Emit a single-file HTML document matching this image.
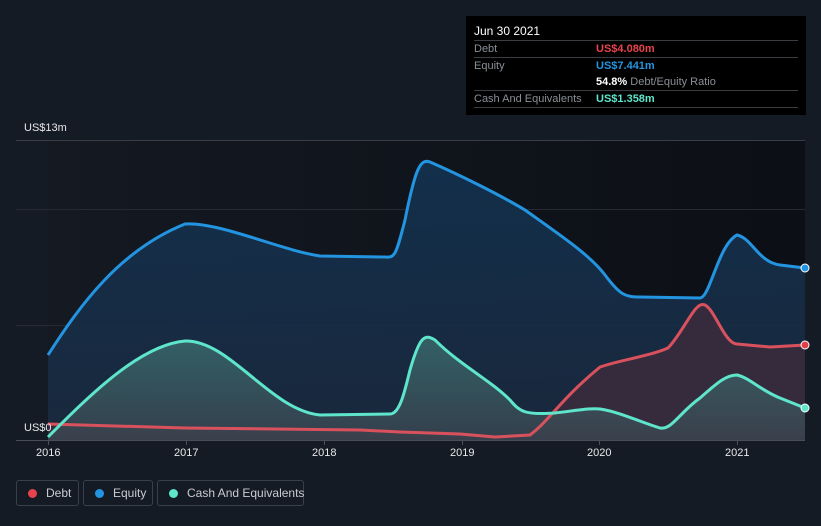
<!DOCTYPE html>
<html><head><meta charset="utf-8"><style>
body{margin:0;background:#151b25;font-family:"Liberation Sans",sans-serif;}
.w{position:relative;width:821px;height:526px;overflow:hidden;background:#151b25}
.tt{position:absolute;left:466px;top:16px;width:340px;height:99px;background:#000;font-size:11px;color:#8a8f96;white-space:nowrap}
.tt .r{position:absolute;left:8px;width:324px;border-top:1px solid #3a3d42;height:16px;line-height:16px}
.tt .v{position:absolute;left:122px;font-weight:bold}
.lg{position:absolute;top:480px;height:26px;border:1px solid #3a404a;border-radius:3px;color:#c8ccd2;font-size:12px;line-height:24px;box-sizing:border-box;white-space:nowrap}
.lg i{display:inline-block;width:9px;height:9px;border-radius:50%;margin:0 9px 0 11px;vertical-align:-1px}
.ax{position:absolute;color:#e6e8ea;font-size:11px}
</style></head><body><div class="w">
<svg width="821" height="526" style="position:absolute;left:0;top:0">
<defs>
<linearGradient id="bg" x1="0" x2="1" y1="0" y2="0"><stop offset="0" stop-color="#141922"/><stop offset="1" stop-color="#0c0f15"/></linearGradient>
<linearGradient id="eq" x1="0" x2="0" y1="0" y2="1"><stop offset="0" stop-color="#133250" stop-opacity=".9"/><stop offset="1" stop-color="#1a2a40" stop-opacity=".9"/></linearGradient>
<linearGradient id="cs" x1="0" x2="0" y1="0" y2="1"><stop offset="0" stop-color="#3a6e6e" stop-opacity=".8"/><stop offset="1" stop-color="#3a4550" stop-opacity=".8"/></linearGradient>
</defs>
<rect x="48" y="140" width="757" height="300" fill="url(#bg)"/>
<line x1="16" x2="805" y1="140.5" y2="140.5" stroke="#3a3f47"/>
<line x1="16" x2="805" y1="209.5" y2="209.5" stroke="#262b33"/>
<line x1="16" x2="805" y1="325.5" y2="325.5" stroke="#262b33"/>
<path d="M48,355 C80,305 120,250 185,224 C220,222 280,250 320,256 L385,257 C395,258 396,255 405,220 C415,170 420,158 430,162 C460,175 500,195 525,210 C560,235 590,255 605,275 C620,295 625,297 640,297 L700,298 C710,298 718,245 737,235 C752,238 758,262 780,265 L805,268 L805,440 L48,440Z" fill="url(#eq)"/>
<path d="M48,424 L185,428 L360,430 L400,432 L460,434 L495,437 L530,435 C550,420 560,400 600,367 C620,360 650,356 668,348 C685,330 695,300 705,305 C715,310 725,344 737,344 L770,347 L805,345 L805,440 L48,440Z" fill="#3c2c3c" fill-opacity=".85"/>
<path d="M48,437 C90,395 140,345 185,341 C230,340 270,410 320,415 L390,414 C400,414 405,390 410,370 C420,335 425,334 435,340 C460,365 490,380 510,400 C520,412 525,415 555,413 C580,410 590,408 600,409 C620,412 640,422 660,428 C672,430 680,412 700,398 C715,385 725,375 737,375 C750,378 760,390 780,398 L805,408 L805,440 L48,440Z" fill="url(#cs)"/>
<g fill="none" stroke-width="3" stroke-linejoin="round">
<path d="M48,355 C80,305 120,250 185,224 C220,222 280,250 320,256 L385,257 C395,258 396,255 405,220 C415,170 420,158 430,162 C460,175 500,195 525,210 C560,235 590,255 605,275 C620,295 625,297 640,297 L700,298 C710,298 718,245 737,235 C752,238 758,262 780,265 L805,268" stroke="#2394e0"/>
<path d="M48,424 L185,428 L360,430 L400,432 L460,434 L495,437 L530,435 C550,420 560,400 600,367 C620,360 650,356 668,348 C685,330 695,300 705,305 C715,310 725,344 737,344 L770,347 L805,345" stroke="#d9515c"/>
<path d="M48,437 C90,395 140,345 185,341 C230,340 270,410 320,415 L390,414 C400,414 405,390 410,370 C420,335 425,334 435,340 C460,365 490,380 510,400 C520,412 525,415 555,413 C580,410 590,408 600,409 C620,412 640,422 660,428 C672,430 680,412 700,398 C715,385 725,375 737,375 C750,378 760,390 780,398 L805,408" stroke="#5ee5cb"/>
</g>
<line x1="16" x2="805" y1="440.5" y2="440.5" stroke="#4a4f57"/>
<g stroke="#4a4f57"><line x1="48.5" x2="48.5" y1="440" y2="445"/><line x1="186.5" x2="186.5" y1="440" y2="445"/><line x1="324.5" x2="324.5" y1="440" y2="445"/><line x1="462.5" x2="462.5" y1="440" y2="445"/><line x1="599.5" x2="599.5" y1="440" y2="445"/><line x1="737.5" x2="737.5" y1="440" y2="445"/></g>
<circle cx="805" cy="268" r="4" fill="#2394e0" stroke="#fff" stroke-width="1"/>
<circle cx="805" cy="345" r="4" fill="#e0404a" stroke="#fff" stroke-width="1"/>
<circle cx="805" cy="408" r="4" fill="#5ee5cb" stroke="#fff" stroke-width="1"/>
</svg>
<div class="ax" style="left:24px;top:122px">US$13m</div>
<div class="ax" style="left:24px;top:422px">US$0</div>
<div class="ax" style="left:36px;top:447px">2016</div>
<div class="ax" style="left:174px;top:447px">2017</div>
<div class="ax" style="left:312px;top:447px">2018</div>
<div class="ax" style="left:450px;top:447px">2019</div>
<div class="ax" style="left:587px;top:447px">2020</div>
<div class="ax" style="left:725px;top:447px">2021</div>
<div class="tt">
<div style="position:absolute;left:8px;top:8px;color:#fff;font-size:12px">Jun 30 2021</div>
<div class="r" style="top:24px">Debt<span class="v" style="color:#e8434d">US$4.080m</span></div>
<div class="r" style="top:41px">Equity<span class="v" style="color:#2394e0">US$7.441m</span></div>
<div style="position:absolute;left:130px;top:58px;line-height:16px"><b style="color:#fff">54.8%</b> Debt/Equity Ratio</div>
<div class="r" style="top:74px">Cash And Equivalents<span class="v" style="color:#5ee5cb">US$1.358m</span></div>
<div class="r" style="top:91px;height:0"></div>
</div>
<div class="lg" style="left:16px;width:63px"><i style="background:#e8434d"></i>Debt</div>
<div class="lg" style="left:83px;width:70px"><i style="background:#2394e0"></i>Equity</div>
<div class="lg" style="left:157px;width:147px"><i style="background:#5ee5cb"></i>Cash And Equivalents</div>
</div></body></html>
